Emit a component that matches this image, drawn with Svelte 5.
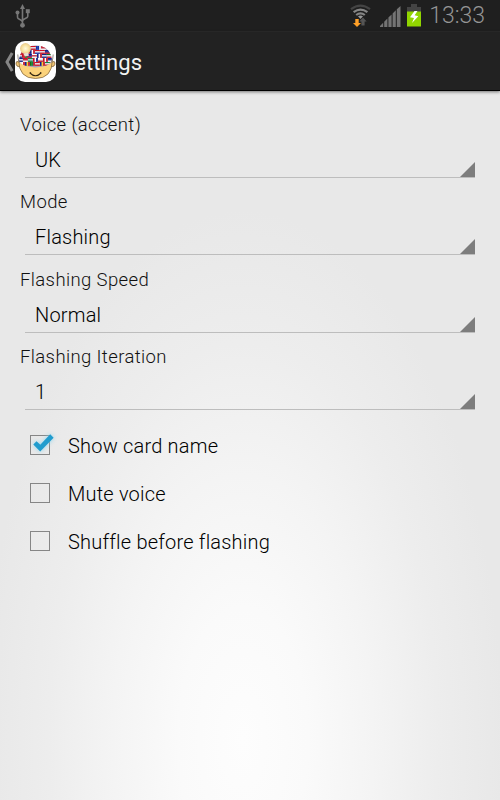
<script>
  let fields = $state([
    { label: 'Voice (accent)', value: 'UK' },
    { label: 'Mode', value: 'Flashing' },
    { label: 'Flashing Speed', value: 'Normal' },
    { label: 'Flashing Iteration', value: '1' }
  ]);

  let options = $state([
    { label: 'Show card name', checked: true },
    { label: 'Mute voice', checked: false },
    { label: 'Shuffle before flashing', checked: false }
  ]);

  // each flag: x, y, then three stripes; v = vertical stripes
  const flags = [
    [11, 5, '#c12', '#fff', '#13a', 0], [16, 5, '#c12', '#fff', '#c12', 0], [21, 5, '#13a', '#13a', '#fff', 1], [26, 5, '#c12', '#c12', '#fff', 0],
    [5, 9, '#fff', '#c12', '#c12', 0], [10, 9, '#171', '#fff', '#c12', 1], [15, 9, '#128', '#fff', '#c12', 1], [20, 9, '#c12', '#fff', '#13a', 0], [25, 9, '#c12', '#fff', '#c12', 0], [30, 9, '#128', '#128', '#c12', 0],
    [2, 13, '#c12', '#fff', '#128', 0], [7, 13, '#c12', '#c12', '#171', 1], [12, 13, '#118', '#118', '#c12', 0], [17, 13, '#fff', '#c12', '#fff', 0], [22, 13, '#128', '#fff', '#c12', 1], [27, 13, '#128', '#fff', '#128', 0], [32, 13, '#171', '#fff', '#c12', 0],
    [3, 17, '#128', '#fff', '#128', 0], [8, 17, '#c12', '#c12', '#fff', 0], [13, 17, '#184', '#cde', '#184', 0], [18, 17, '#c12', '#fff', '#128', 1], [23, 17, '#fff', '#fff', '#c12', 0], [28, 17, '#c12', '#fff', '#c12', 1], [33, 17, '#128', '#128', '#fff', 0],
    [5, 21, '#fff', '#fff', '#c12', 1], [10, 21, '#128', '#fc2', '#c12', 1], [15, 21, '#171', '#184', '#c12', 1], [20, 21, '#c12', '#fff', '#c12', 0], [25, 21, '#128', '#fc2', '#c12', 1], [30, 21, '#184', '#fff', '#c12', 0]
  ];
</script>

<div class="screen">
  <div class="status">
    <svg class="usb" width="16" height="26" viewBox="0 0 16 26" fill="none" stroke="#777" stroke-width="1.6">
      <path d="M7.5 4v18M2.5 10v3.2c0 2.8 5 2 5 5.2M12.8 9v3.2c0 2.8-5.3 2-5.3 5.2" />
      <path d="M7.5 0 10 5H5z" fill="#777" stroke="none" />
      <circle cx="2.5" cy="8.5" r="2" fill="#777" stroke="none" />
      <path d="M10.8 5.2h4v4h-4z" fill="#777" stroke="none" />
      <circle cx="7.5" cy="21.3" r="2.4" fill="#777" stroke="none" />
    </svg>
    <div class="tray">
      <svg width="21" height="23" viewBox="0 0 21 23">
        <g fill="none" stroke-width="2.2">
          <path d="M1 5.2Q10.5-2 20 5.2" stroke="#444" />
          <path d="M3.6 8.2Q10.5 3 17.4 8.2" stroke="#858585" />
          <path d="M6.2 11Q10.5 7.6 14.8 11" stroke="#858585" />
        </g>
        <path d="M8 12.2q2.5-1.5 5 0L10.5 15z" fill="#999" />
        <path d="M5.3 15h3.4v4H11l-4 4-4-4h2.3z" fill="#ffa027" />
        <path d="M11.4 21.5v-4H9.3l3.7-4 3.7 4h-2.1v4z" fill="#555" />
      </svg>
      <svg class="signal" width="21" height="21" viewBox="0 0 21 21" fill="#747474">
        <path d="M0 21v-1l3.2-3.2V21zM4.2 21v-5.2l3.2-3.2V21zM8.4 21v-9.4l3.2-3.2V21zM12.6 21V7.4l3.2-3.2V21zM16.8 21V3.2L20.5 0v21z" />
      </svg>
      <svg class="battery" width="16" height="23" viewBox="0 0 16 23">
        <path d="M5 0h6v3h4v5H1V3h4z" fill="#444" />
        <path d="M1 7.5h14v15H1z" fill="#91d500" />
        <path d="M8.5 7 4 13.3l4 .7-2 5 6.3-6.7-3.7-1L11.5 7z" fill="#fff" />
      </svg>
      <span class="clock">13:33</span>
    </div>
  </div>

  <header>
    <svg class="back" width="9" height="20" viewBox="0 0 9 20">
      <path d="M7.2 1 2 10l5.2 9" fill="none" stroke="#858585" stroke-width="3" />
    </svg>
    <svg class="logo" width="41" height="41" viewBox="0 0 41 41">
      <defs>
        <clipPath id="brain"><path d="M4 21C4 10 11 4.5 21 4.5S37 11 37 21Q33 25.5 20.5 26.5 8 25.5 4 21z" /></clipPath>
        <radialGradient id="bulb"><stop offset="0" stop-color="#fffbe0" /><stop offset=".6" stop-color="#f9e4a4" /><stop offset="1" stop-color="#e9c98a" /></radialGradient>
      </defs>
      <rect width="41" height="41" rx="10" fill="#fff" />
      <path d="M4 21q-3-1.5-3 1 0 4 4 3.6M37 21q3-1.5 3 1 0 4-4 3.6" fill="#efc474" stroke="#654b29" stroke-width=".7" />
      <path d="M3.7 19q0 18.5 16.8 18.5T37.3 19Q20.5 29 3.7 19z" fill="#fbd27b" stroke="#765a34" stroke-width=".7" />
      <g clip-path="url(#brain)">
        <rect width="41" height="30" fill="#a99fb5" />
        {#each flags as [x, y, a, b, c, v]}
          <g transform="translate({x} {y})">
            <rect width={v ? 1.7 : 4.8} height={v ? 3.8 : 1.3} fill={a} />
            <rect x={v ? 1.7 : 0} y={v ? 0 : 1.3} width={v ? 1.5 : 4.8} height={v ? 3.8 : 1.3} fill={b} />
            <rect x={v ? 3.2 : 0} y={v ? 0 : 2.6} width={v ? 1.6 : 4.8} height={v ? 3.8 : 1.2} fill={c} />
          </g>
        {/each}
      </g>
      <path d="M2.8 13.5q-.2 5 2 8M38.2 13.5q0 5-2 8" fill="none" stroke="#776e62" stroke-width=".8" />
      <path d="M15 32q5.5 5.5 11 0M14.5 32.3l1.5-.8M25 31.5l1.5.8" fill="none" stroke="#302310" stroke-width="1.1" />
      <circle cx="10.5" cy="7.5" r="5.4" fill="url(#bulb)" />
      <path d="m8.5 12.5 4.8-.8.6 3-4.2.7z" fill="#eadbd0" />
    </svg>
    <h1>Settings</h1>
  </header>

  <main>
    {#each fields as field}
      <div class="field">
        <div class="label">{field.label}</div>
        <div class="spinner">
          <span>{field.value}</span>
          <svg width="15" height="15" viewBox="0 0 15 15"><path d="M15 0v15H0z" fill="#7d7d7d" /></svg>
        </div>
      </div>
    {/each}

    <div class="options">
      {#each options as option}
        <label class="option">
          <input type="checkbox" bind:checked={option.checked} />
          <span class="box">
            {#if option.checked}
              <svg width="28" height="26" viewBox="0 0 28 26">
                <path d="m4.3 13.5 3.2-3.2 3.8 3.5L21.2 3.3l3.4 3.4L11.2 20.4z" fill="#209cce" />
              </svg>
            {/if}
          </span>
          <span class="text">{option.label}</span>
        </label>
      {/each}
    </div>
  </main>
</div>

<style>
  :global(body) {
    margin: 0;
  }

  .screen {
    display: flex;
    flex-direction: column;
    width: 500px;
    height: 800px;
    overflow: hidden;
    font-family: Roboto, sans-serif;
    background: radial-gradient(ellipse 260px 530px at 243px 740px, #fdfdfd, #fafafa 25%, #f4f4f4 50%, #ededed 75%, #e8e8e8);
  }

  .status {
    display: flex;
    justify-content: space-between;
    align-items: flex-start;
    box-sizing: border-box;
    height: 32px;
    padding: 4px 15px 0;
    background: #1f1f1f;
    border-bottom: 1px solid #2b2b2b;
  }

  .tray {
    display: flex;
    align-items: flex-start;
  }

  .signal {
    margin: 2px 0 0 9px;
  }

  .battery {
    margin-left: 5px;
  }

  .clock {
    margin-left: 7px;
    font-size: 23px;
    font-weight: 300;
    line-height: 24px;
    color: #959595;
  }

  header {
    display: flex;
    align-items: center;
    box-sizing: border-box;
    height: 59px;
    padding: 2px 0 1px 5px;
    background: #222;
    border-bottom: 1px solid #000;
    box-shadow: 0 1px 3px rgba(0, 0, 0, 0.5);
  }

  .logo {
    margin-left: 1px;
  }

  h1 {
    margin: 2px 0 0 5px;
    font-size: 22px;
    font-weight: 400;
    letter-spacing: 0.1px;
    color: #f3f3f3;
  }

  main {
    padding-top: 9.3px;
  }

  .field {
    box-sizing: border-box;
    height: 77.5px;
    padding: 12.5px 20px 0;
  }

  .label {
    font-size: 18.5px;
    font-weight: 350;
    line-height: 24px;
    letter-spacing: 0.38px;
    color: #111;
  }

  .spinner {
    display: flex;
    justify-content: space-between;
    align-items: flex-end;
    box-sizing: border-box;
    height: 41px;
    margin: 0 5px;
    padding-left: 10px;
    border-bottom: 1px solid #bdbdbd;
    font-size: 20px;
    font-weight: 350;
    letter-spacing: 0.2px;
    color: #000;
  }

  .spinner span {
    line-height: 34px;
  }

  .spinner svg {
    display: block;
  }

  .options {
    padding: 11.7px 0 0 30px;
  }

  .option {
    display: flex;
    align-items: center;
    height: 48px;
    font-size: 20px;
    font-weight: 350;
    letter-spacing: 0.2px;
    color: #000;
  }

  .option input {
    display: none;
  }

  .box {
    position: relative;
    box-sizing: border-box;
    width: 20px;
    height: 20px;
    margin: 0 18px 2px 0;
    border: 1px solid #868686;
  }

  .box svg {
    position: absolute;
    left: -2px;
    top: -5px;
    filter: drop-shadow(0 0 2px #8bd4ee);
  }
</style>
